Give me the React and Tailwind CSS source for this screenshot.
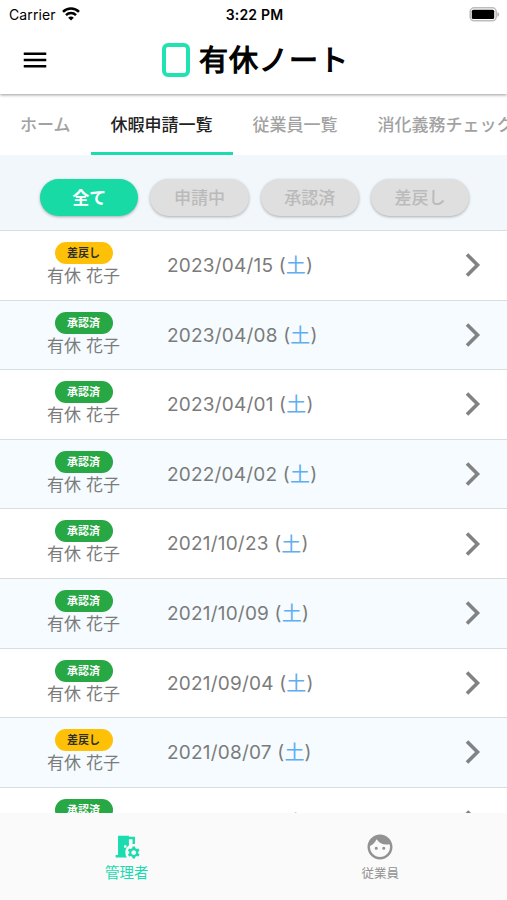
import { MdFace, MdMenu, MdRoomPreferences } from "react-icons/md";

const tabs = ["ホーム", "休暇申請一覧", "従業員一覧", "消化義務チェック"];
const filters = ["全て", "申請中", "承認済", "差戻し"];

const requests = [
    { status: "差戻し", date: "2023/04/15" },
    { status: "承認済", date: "2023/04/08" },
    { status: "承認済", date: "2023/04/01" },
    { status: "承認済", date: "2022/04/02" },
    { status: "承認済", date: "2021/10/23" },
    { status: "承認済", date: "2021/10/09" },
    { status: "承認済", date: "2021/09/04" },
    { status: "差戻し", date: "2021/08/07" },
    { status: "承認済", date: "2021/06/05" },
];

function StatusBar() {
    return (
        <div className="grid grid-cols-3 items-center h-7 pl-[9px] pr-[7px] text-[14px] text-black">
            <div className="flex items-center gap-1.5 tracking-[0.1px]">
                Carrier
                <svg width="18" height="14" viewBox="0 0 18 14" fill="none" stroke="black" strokeWidth="2.5">
                    <path d="M1 4.9a11.3 11.3 0 0 1 16 0" />
                    <path d="M4 8.1a7.1 7.1 0 0 1 10 0" />
                    <path d="M9 13.6 6.2 10.8a4 4 0 0 1 5.6 0z" fill="black" stroke="none" />
                </svg>
            </div>
            <div className="text-center font-semibold text-[14px] tracking-[0.2px]">3:22 PM</div>
            <svg className="justify-self-end" width="31" height="15" viewBox="0 0 31 15">
                <rect x="1.2" y="0.8" width="26" height="13" rx="4" fill="white" stroke="#bdbdbd" strokeWidth="1.6" />
                <rect x="2.8" y="2.7" width="22.4" height="9.3" rx="1.5" fill="black" />
                <path d="M28.4 5v4.8c1-.4 1.8-1.3 1.8-2.4S29.4 5.4 28.4 5z" fill="#b5b5b5" />
            </svg>
        </div>
    );
}

function Header() {
    return (
        <header className="relative z-10 h-[94px] shrink-0 bg-white shadow-[0_1px_3px_rgba(0,0,0,0.4)]">
            <StatusBar />
            <div className="flex items-center h-[64px] pl-[20px]">
                <MdMenu size={30} className="text-black" />
                <div className="flex items-center ml-[112px] gap-[9px]">
                    <div className="w-[28px] h-[34px] rounded-[6px] border-4 border-[#22e3b0]" />
                    <h1 className="text-[29px] leading-none font-normal tracking-[1px] text-black whitespace-nowrap [-webkit-text-stroke:1.2px_black] [stroke-linejoin:round]">
                        有休ノート
                    </h1>
                </div>
            </div>
        </header>
    );
}

function Tabs() {
    return (
        <nav className="flex h-[61px] shrink-0 bg-white overflow-hidden">
            {tabs.map((tab, i) => (
                <div
                    key={tab}
                    className={`flex items-center justify-center shrink-0 px-5 pt-[5px] text-[17px] font-medium whitespace-nowrap border-b-[3px] ${
                        i === 1 ? "text-[#222] border-[#1bdcae]" : "text-[#a2a2a2] border-transparent"
                    }`}
                >
                    {tab}
                </div>
            ))}
        </nav>
    );
}

function Filters() {
    return (
        <div className="flex items-start gap-3 h-[75px] shrink-0 pt-6 pl-10 bg-[#f2f7fb]">
            {filters.map((label, i) => (
                <button
                    key={label}
                    className={`h-[37px] w-[98.3px] rounded-full text-[17px] pt-[3px] shadow-[0_1px_3px_rgba(0,0,0,0.3)] ${
                        i === 0 ? "bg-[#17daa5] text-white font-bold" : "bg-[#dfdfdf] text-[#bababa] font-medium"
                    }`}
                >
                    {label}
                </button>
            ))}
        </div>
    );
}

function RequestRow({ request, striped }) {
    return (
        <li className={`flex h-[69.6px] border-t border-[#d8dddf] ${striped ? "bg-[#f5fbfe]" : "bg-white"}`}>
            <div className="w-[167px] pt-[11px] flex flex-col items-center">
                <span
                    className={`w-[58px] h-[22px] rounded-full text-center text-[11px] leading-[23px] font-bold ${
                        request.status === "承認済" ? "bg-[#28a745] text-white" : "bg-[#ffc107] text-[#30302a]"
                    }`}
                >
                    {request.status}
                </span>
                <span className="text-[17px] leading-6 text-[#7b7b7b] whitespace-nowrap">有休 花子</span>
            </div>
            <div className="flex-1 flex items-center pt-[2px] text-[19px] tracking-[0.2px] text-[#7b7b7b] whitespace-pre">
                {request.date} (<span className="text-[20px] text-[#5faef0]">土</span>)
            </div>
            <svg className="self-center mr-[25px]" width="18" height="26" viewBox="0 0 18 26" fill="none" stroke="#828282" strokeWidth="3.6">
                <path d="M3 2.5 13.5 13 3 23.5" />
            </svg>
        </li>
    );
}

function BottomNav() {
    return (
        <footer className="grid grid-cols-2 h-[87px] shrink-0 bg-[#fafafa]">
            <div className="flex flex-col items-center pt-[19px] text-[#1bdcae]">
                <MdRoomPreferences size={29} />
                <span className="text-[14.5px] leading-6">管理者</span>
            </div>
            <div className="flex flex-col items-center pt-[19px] text-[#929292]">
                <MdFace size={30} />
                <span className="text-[12.5px] leading-6">従業員</span>
            </div>
        </footer>
    );
}

export default function App() {
    return (
        <div className="flex flex-col w-[507px] h-[900px] overflow-hidden bg-white font-['Inter','Noto_Sans_CJK_JP',sans-serif]">
            <Header />
            <Tabs />
            <Filters />
            <ul className="flex-1 min-h-0 overflow-hidden">
                {requests.map((request, i) => (
                    <RequestRow key={request.date} request={request} striped={i % 2 === 1} />
                ))}
            </ul>
            <BottomNav />
        </div>
    );
}
